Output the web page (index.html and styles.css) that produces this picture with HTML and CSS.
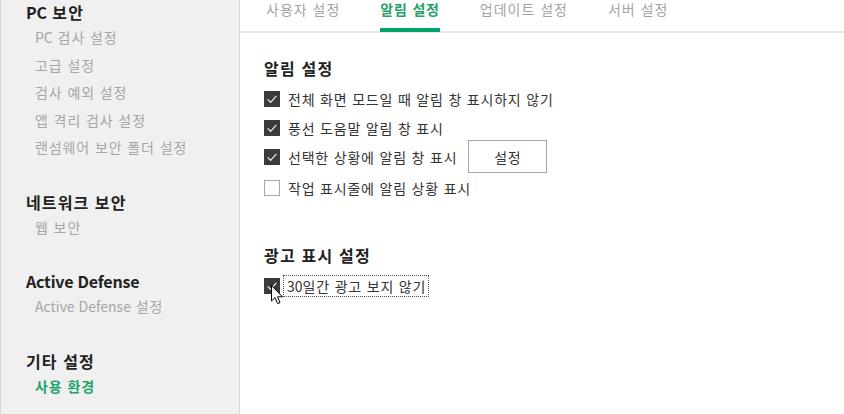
FILE: index.html
```html
<!DOCTYPE html>
<html lang="ko">
<head>
<meta charset="utf-8">
<title>설정</title>
<link rel="stylesheet" href="styles.css">
</head>
<body>
<div class="app">
  <nav class="sidebar">
    <div class="group">
      <div class="group-title"><span class="en">PC</span> 보안</div>
      <div class="item"><span class="en">PC</span> 검사 설정</div>
      <div class="item">고급 설정</div>
      <div class="item">검사 예외 설정</div>
      <div class="item">앱 격리 검사 설정</div>
      <div class="item">랜섬웨어 보안 폴더 설정</div>
    </div>
    <div class="group">
      <div class="group-title">네트워크 보안</div>
      <div class="item">웹 보안</div>
    </div>
    <div class="group">
      <div class="group-title"><span class="en">Active Defense</span></div>
      <div class="item"><span class="en">Active Defense</span> 설정</div>
    </div>
    <div class="group">
      <div class="group-title">기타 설정</div>
      <div class="item active">사용 환경</div>
    </div>
  </nav>
  <main class="main">
    <div class="tabs">
      <div class="tab">사용자 설정</div>
      <div class="tab active">알림 설정</div>
      <div class="tab">업데이트 설정</div>
      <div class="tab">서버 설정</div>
    </div>
    <div class="content">
      <section class="section">
        <h2 class="section-title">알림 설정</h2>
        <div class="row"><span class="cb checked"><svg viewBox="0 0 16 16" width="16" height="16"><path d="M3.6 8.4 L6.6 11.3 L12.4 4.8" fill="none" stroke="#eee" stroke-width="1.2"/></svg></span><span class="label">전체 화면 모드일 때 알림 창 표시하지 않기</span></div>
        <div class="row"><span class="cb checked"><svg viewBox="0 0 16 16" width="16" height="16"><path d="M3.6 8.4 L6.6 11.3 L12.4 4.8" fill="none" stroke="#eee" stroke-width="1.2"/></svg></span><span class="label">풍선 도움말 알림 창 표시</span></div>
        <div class="row"><span class="cb checked"><svg viewBox="0 0 16 16" width="16" height="16"><path d="M3.6 8.4 L6.6 11.3 L12.4 4.8" fill="none" stroke="#eee" stroke-width="1.2"/></svg></span><span class="label">선택한 상황에 알림 창 표시</span><button class="btn">설정</button></div>
        <div class="row last"><span class="cb"></span><span class="label">작업 표시줄에 알림 상황 표시</span></div>
      </section>
      <section class="section second">
        <h2 class="section-title">광고 표시 설정</h2>
        <div class="row cursor-row"><span class="cb checked"><svg viewBox="0 0 16 16" width="16" height="16"><path d="M3.6 8.4 L6.6 11.3 L12.4 4.8" fill="none" stroke="#eee" stroke-width="1.2"/></svg></span><span class="label focus"><span class="en">30</span>일간 광고 보지 않기</span>
          <svg class="cursor" viewBox="0 0 13 20" width="13" height="20"><path d="M0.5 0.5 L0.5 16 L4 12.6 L6.6 18.6 L9 17.6 L6.5 11.8 L11.5 11.8 Z" fill="#fff" stroke="#000" stroke-width="1" stroke-linejoin="miter"/></svg>
        </div>
      </section>
    </div>
  </main>
</div>
</body>
</html>
```

FILE: styles.css
```css
* { box-sizing: border-box; }
html, body { margin: 0; padding: 0; }
body {
  width: 844px;
  height: 414px;
  overflow: hidden;
  background: #fff;
  font-family: "Noto Sans CJK KR", "Noto Sans", sans-serif;
  color: #333;
}
.app { display: flex; height: 414px; }
.en { letter-spacing: 0; }

.sidebar {
  width: 240px;
  flex: 0 0 240px;
  background: #f0f0f0;
  border-left: 1px solid #d8d8d8;
  border-right: 1px solid #d4d4d4;
  padding-left: 25px;
  display: flex;
  flex-direction: column;
  gap: 28px;
}
.group-title {
  font-size: 16px;
  font-weight: 700;
  line-height: 24px;
  color: #222;
  letter-spacing: 1.1px;
}
.group-title .en { letter-spacing: -0.2px; }
.item {
  font-size: 14px;
  line-height: 27.5px;
  color: #a6a6a6;
  padding-left: 9px;
  letter-spacing: 0.9px;
}
.item.active { color: #1ea36a; font-weight: 700; }

.main { flex: 1; display: flex; flex-direction: column; }
.tabs {
  display: flex;
  align-items: flex-start;
  height: 33px;
  border-bottom: 2px solid #e8e8e8;
  padding-left: 6px;
}
.tab {
  margin: 0 20px;
  height: 32px;
  padding-top: 1px;
  font-size: 14px;
  line-height: 16px;
  color: #a3a3a3;
  letter-spacing: 1px;
  border-bottom: 4px solid transparent;
}
.tab.active {
  color: #1ea36a;
  font-weight: 700;
  letter-spacing: 0.8px;
  border-bottom-color: #00a468;
}

.content { padding: 23px 0 0 24px; }
.section-title {
  margin: 0 0 4px;
  font-size: 16px;
  font-weight: 700;
  line-height: 24px;
  color: #222;
  letter-spacing: 1.2px;
}
.section.second { margin-top: 41px; }
.row {
  display: flex;
  align-items: center;
  height: 29px;
  font-size: 14px;
  position: relative;
}
.row.last { height: 31px; padding-top: 2px; }
.cb {
  width: 16px;
  height: 16px;
  flex: 0 0 16px;
  border: 1px solid #a8a8a8;
  background: #fff;
  display: flex;
}
.cb.checked { background: #3b3b3b; border-color: #3b3b3b; }
.cb svg { display: block; margin: -1px; }
.label { margin-left: 8px; color: #333; line-height: 20px; letter-spacing: 0.8px; }
.label.focus {
  margin-left: 4px;
  padding: 0 2px 0 3px;
  line-height: 20px;
  outline: 1px dotted #555;
}
.btn {
  margin: -2px 0 -2px 11px;
  width: 79px;
  height: 33px;
  border: 1px solid #a6a6a6;
  background: #fff;
  font-family: inherit;
  font-size: 14px;
  color: #333;
  padding: 0;
  letter-spacing: 0.8px;
}
.cursor-row { height: 30px; }
.cursor {
  position: absolute;
  left: 7px;
  top: 14px;
}
```
